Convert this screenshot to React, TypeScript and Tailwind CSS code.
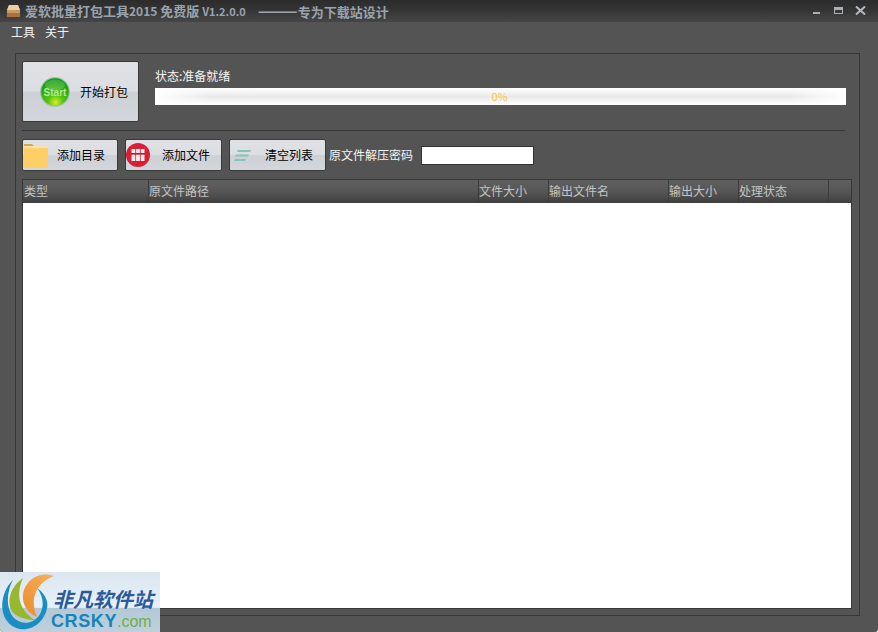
const font = { fontFamily: '"Noto Sans CJK SC", "Liberation Sans", sans-serif' };

const btn =
  "flex items-center rounded-[2px] border border-[#3a3a3a] bg-[linear-gradient(180deg,#dfe1e4_0%,#dcdee2_48%,#cdd0d5_52%,#d3d6da_100%)] text-black text-[12px]";

function Folder() {
  return (
    <svg width="25" height="25" viewBox="0 0 25 25">
      <path d="M1 1h8l2 2h-10z" fill="#d9a94e" />
      <rect x="1" y="3" width="24" height="3" fill="#f3e2b8" />
      <rect x="1" y="5" width="24" height="20" fill="#fdcf66" />
    </svg>
  );
}

function RedBooks() {
  return (
    <svg width="24" height="24" viewBox="0 0 24 24">
      <circle cx="12" cy="12" r="12" fill="#d81f36" />
      <g fill="#f8ecec">
        <rect x="5.5" y="6" width="3.8" height="12" />
        <rect x="10.1" y="6" width="3.8" height="12" />
        <rect x="14.7" y="6" width="3.8" height="12" />
      </g>
      <rect x="5" y="10" width="14" height="1.6" fill="#b31a2c" />
    </svg>
  );
}

function Lines() {
  return (
    <svg width="17" height="11" viewBox="0 0 17 11">
      <path d="M4 0h13l-1 2H3z" fill="#86c4b8" />
      <path d="M2 4.5h13l-1 2H1z" fill="#86c4b8" />
      <path d="M1 9h11l-1 2H0z" fill="#86c4b8" />
    </svg>
  );
}

function StartBall() {
  return (
    <svg width="30" height="30" viewBox="0 0 30 30">
      <defs>
        <radialGradient id="ball" cx="52%" cy="88%" r="80%">
          <stop offset="0%" stopColor="#d6ee2a" />
          <stop offset="35%" stopColor="#55c410" />
          <stop offset="100%" stopColor="#109a0c" />
        </radialGradient>
      </defs>
      <circle cx="15" cy="15" r="15" fill="#9cc2b0" />
      <circle cx="15" cy="15" r="13.8" fill="url(#ball)" />
      <ellipse cx="15" cy="8" rx="10" ry="5.5" fill="#ffffff" opacity="0.18" />
      <text x="15" y="18.5" textAnchor="middle" fontSize="10" fontWeight="700" fill="#b4e89a" fontFamily="Liberation Sans, sans-serif">
        Start
      </text>
    </svg>
  );
}

function BoxIcon() {
  return (
    <svg width="15" height="14" viewBox="0 0 15 14">
      <path d="M3 1h9l2 5v7H1V6z" fill="#c99a5e" />
      <path d="M3 1h9l2 5H1z" fill="#e8cfa8" />
      <rect x="1" y="9" width="13" height="4" fill="#a8743c" />
    </svg>
  );
}

function Logo() {
  return (
    <div className="absolute left-0 bottom-0 w-[160px] h-[60px] overflow-hidden bg-[linear-gradient(180deg,#dbe6f0_0%,#e8f1f9_59%,#b4c8d6_60%,#bfd0dc_100%)]">
      <svg width="60" height="60" viewBox="0 0 60 60" className="absolute left-0 top-0">
        <defs>
          <linearGradient id="org" x1="1" y1="0" x2="0" y2="1">
            <stop offset="0%" stopColor="#f5b25a" />
            <stop offset="100%" stopColor="#ee8a2e" />
          </linearGradient>
        </defs>
        <path d="M13 8C0 20-3 46 14 55c14 7 30-3 33-19 2-8-4-16-10-20 6 8 7 16 4 24-5 12-19 14-27 6C6 38 6 20 13 8z" fill="#1b8cc4" />
        <path d="M23 6C8 16 5 36 16 43c6 4 14 5 19 5C22 40 14 26 23 6z" fill="#97b82e" />
        <path d="M54 4C40-1 24 8 23 24c-1 10 7 18 14 21C32 34 30 14 54 4z" fill="url(#org)" />
      </svg>
      <div className="absolute left-[53px] top-[15px] text-[20px] leading-[23px] font-bold italic text-[#2a5a9c] whitespace-nowrap">
        非凡软件站
      </div>
      <div
        className="absolute left-[51px] top-[39px] text-[18px] leading-[21px] font-bold tracking-[0.6px] text-[#1584b8] whitespace-nowrap"
        style={{ fontFamily: '"Liberation Sans", sans-serif' }}
      >
        CRSKY<span className="text-[16px] font-normal tracking-normal text-[#6fae4a]">.com</span>
      </div>
    </div>
  );
}

const cols: [string, number][] = [
  ["类型", 126],
  ["原文件路径", 330],
  ["文件大小", 70],
  ["输出文件名", 120],
  ["输出大小", 70],
  ["处理状态", 90],
  ["", 22],
];

export default function App() {
  return (
    <div className="relative w-[878px] h-[632px] overflow-hidden flex flex-col bg-[#545454] rounded-b-[3px]" style={font}>
      <div className="h-[22px] flex items-center pl-[6px] pr-[12px] bg-[linear-gradient(180deg,#2c2c2c_0%,#333333_40%,#464646_100%)] text-[13px] font-bold text-[#9aa3ad]">
        <BoxIcon />
        <span className="ml-[4px] whitespace-nowrap">
          爱软批量打包工具<span className="text-[12px]">2015</span> 免费版{" "}
          <span className="text-[11px] text-[#98a4b2]">V1.2.0.0</span>
        </span>
        <span className="ml-[12px] whitespace-nowrap leading-[18px]">
          <span className="text-[16px] leading-[16px]">———</span>专为下载站设计
        </span>
        <div className="ml-auto flex items-center text-[#a9b0b6]">
          <div className="w-[7px] h-[2px] mt-[3px] bg-[#a9b0b6] mr-[14px]" />
          <div className="w-[9px] h-[7px] border border-[#a9b0b6] border-t-[3px] mr-[12px] -mt-[2px]" />
          <svg width="11" height="9" viewBox="0 0 11 9" className="-mt-[1px]">
            <path d="M1 0.5L10 8.5M10 0.5L1 8.5" stroke="#b4bac0" strokeWidth="2" />
          </svg>
        </div>
      </div>

      <div className="h-[31px] flex items-start pl-[11px] pt-[1px] gap-[10px] text-[12px] leading-[18px] text-[#f2f2f2]">
        <span>工具</span>
        <span>关于</span>
      </div>

      <div className="ml-[15px] w-[845px] h-[563px] border border-[#383838] pl-[6px] pr-[6px] pt-[7px] flex flex-col">
        <div className="flex h-[61px]">
          <button className={`${btn} w-[117px] h-[61px] pl-[17px]`}>
            <StartBall />
            <span className="ml-[10px] mt-[1px]">开始打包</span>
          </button>
          <div className="ml-[16px] flex-1 pt-[6px]">
            <div className="text-[12px] leading-[18px] text-[#f4f4f4]">状态:准备就绪</div>
            <div className="mt-[3px] h-[17px] w-[691px] flex items-center justify-center text-[11px] text-[#f5c84a] bg-[linear-gradient(180deg,#ffffff_0%,#e9e9e9_50%,#ffffff_100%)]">
              <span className="w-full h-full pr-[2px] flex items-center justify-center bg-[linear-gradient(90deg,#ffffff_0%,transparent_8%,transparent_92%,#ffffff_100%)]">0%</span>
            </div>
          </div>
        </div>

        <div className="mt-[8px] w-[823px] h-px bg-[#383838]" />

        <div className="mt-[8px] flex items-center h-[32px]">
          <button className={`${btn} w-[96px] h-[32px]`}>
            <Folder />
            <span className="ml-[9px]">添加目录</span>
          </button>
          <button className={`${btn} w-[97px] h-[32px] ml-[7px]`}>
            <RedBooks />
            <span className="ml-[12px]">添加文件</span>
          </button>
          <button className={`${btn} w-[97px] h-[32px] ml-[7px] pl-[4px]`}>
            <Lines />
            <span className="ml-[14px]">清空列表</span>
          </button>
          <span className="ml-[3px] text-[12px] text-[#f4f4f4] whitespace-nowrap">原文件解压密码</span>
          <div className="ml-[8px] w-[113px] h-[19px] bg-white border border-[#333333]" />
        </div>

        <div className="mt-[8px] w-[830px] h-[430px] border border-[#383838] flex flex-col">
          <div className="flex h-[23px] bg-[linear-gradient(180deg,#5f5f5f_0%,#565656_50%,#3f3f3f_100%)] text-[12px] text-[#c4c4c4] leading-[22px]">
            {cols.map(([name, w], i) => (
              <div
                key={i}
                className="first:pl-[1px] border-r border-[#3c3c3c] whitespace-nowrap shrink-0 last:border-r-0"
                style={{ width: w }}
              >
                {name}
              </div>
            ))}
          </div>
          <div className="flex-1 bg-white" />
        </div>
      </div>

      <Logo />
    </div>
  );
}
